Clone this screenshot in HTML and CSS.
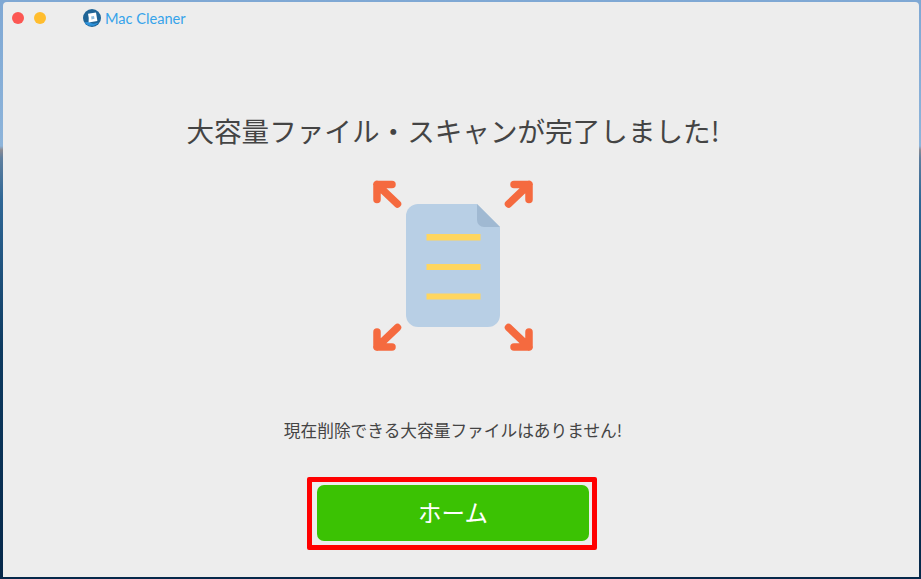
FILE: index.html
```html
<!DOCTYPE html>
<html lang="ja">
<head>
  <meta charset="UTF-8" />
  <meta name="viewport" content="width=device-width, initial-scale=1.0" />
  <title>Mac Cleaner</title>
  <link rel="stylesheet" href="styles.css">
</head>
<body>
  <div class="window">
    <!-- Barre de titre -->
    <div class="titlebar">
      <span class="dot dot-red"></span>
      <span class="dot dot-yellow"></span>
      <svg class="logo" viewBox="0 0 18 18">
        <circle cx="9" cy="9" r="9" fill="#1f6496" />
        <path d="M1.5 13.5 Q5 12.5 8 14 Q11 15.5 15.5 13.5 A9 9 0 0 1 1.5 13.5 Z" fill="#2e93dc" />
        <path d="M5 4.8 L13 3.6 L14.4 12 L5.6 13.6 Q6.2 9 5 4.8 Z" fill="#fff" />
        <path d="M8 7.4 L11 6.9 L11.5 9.8 L8.4 10.4 Q8.6 9 8 7.4 Z" fill="#8dbcdc" />
      </svg>
      <span class="app-name">Mac Cleaner</span>
    </div>

    <div class="content">
      <h1>大容量ファイル・スキャンが完了しました!</h1>

      <svg class="illus" viewBox="0 0 160 172">
        <path d="M45 24 H104 L127 47 V135 A12 12 0 0 1 115 147 H45 A12 12 0 0 1 33 135 V36 A12 12 0 0 1 45 24 Z" fill="#b8cfe5" />
        <path d="M104 24 L127 47 H111 A7 7 0 0 1 104 40 Z" fill="#a0b9d2" />
        <rect x="53.5" y="54" width="54" height="6.5" fill="#ffd65f" />
        <rect x="53.5" y="84" width="54" height="6" fill="#ffd65f" />
        <rect x="53.5" y="113.5" width="54" height="6" fill="#ffd65f" />
        <g class="arrow">
          <path id="arr" d="M19 4.5 H4 V19.5 M4 4.5 L24.5 24" />
          <use href="#arr" transform="matrix(-1 0 0 1 160 0)" />
          <use href="#arr" transform="matrix(1 0 0 -1 0 171.5)" />
          <use href="#arr" transform="matrix(-1 0 0 -1 160 171.5)" />
        </g>
      </svg>

      <p class="message">現在削除できる大容量ファイルはありません!</p>

      <div class="highlight">
        <button class="home-btn">ホーム</button>
      </div>
    </div>
  </div>
</body>
</html>
```

FILE: styles.css
```css
* {
  margin: 0;
  padding: 0;
  box-sizing: border-box;
}
html, body {
  height: 100%;
}
body {
  font-family: "Lato", "Noto Sans CJK JP", sans-serif;
  background: linear-gradient(#7fa8d4 0, #8db4da 146px, #8a8a92 150px, #5f7f9f 158px, #2f6796 200px, #0d3a60 350px, #06284a 579px);
  padding: 2px 2px 2px 3px;
  overflow: hidden;
}

/* Fenetre */
.window {
  height: 575px;
  background: #ededed;
  border-radius: 4px 4px 0 0;
}
.titlebar {
  height: 32px;
  display: flex;
  align-items: center;
  padding-left: 9px;
}
.dot {
  width: 12px;
  height: 12px;
  border-radius: 50%;
  margin-right: 10px;
}
.dot-red {
  background: #fc5753;
}
.dot-yellow {
  background: #ffbd2e;
}
.logo {
  width: 18px;
  height: 18px;
  margin-left: 27px;
}
.app-name {
  margin-left: 4px;
  font-size: 14.6px;
  color: #35a3ea;
}

/* Contenu */
.content {
  display: flex;
  flex-direction: column;
  align-items: center;
  padding-right: 16px;
}
h1 {
  margin-top: 74px;
  font-size: 27.6px;
  line-height: 44px;
  font-weight: 400;
  color: #444;
  font-family: "Noto Sans CJK JP", sans-serif;
}
.illus {
  display: block;
  width: 160px;
  height: 172px;
  margin-top: 28px;
}
.arrow path, .arrow use {
  fill: none;
  stroke: #f56a3f;
  stroke-width: 7.5;
  stroke-linecap: round;
  stroke-linejoin: round;
}
.message {
  margin-top: 66px;
  font-size: 16.7px;
  line-height: 24px;
  color: #444;
  font-family: "Noto Sans CJK JP", sans-serif;
}
.highlight {
  margin-top: 35px;
  margin-right: 2px;
  border: 5px solid #ff0000;
  border-radius: 2px;
  padding: 3px 3px 4px 5px;
  width: 290px;
}
.home-btn {
  display: block;
  width: 100%;
  height: 56px;
  padding-bottom: 3px;
  border: none;
  border-radius: 7px;
  background: #3bc203;
  color: #fff;
  font-size: 23.5px;
  font-family: "Noto Sans CJK JP", sans-serif;
  cursor: pointer;
}
```
